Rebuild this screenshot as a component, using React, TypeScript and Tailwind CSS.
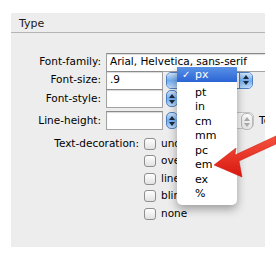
import React from 'react';

const FONT = { fontFamily: '"DejaVu Sans", "Noto Sans", sans-serif' };

function Stepper({ disabled = false }: { disabled?: boolean }) {
  return (
    <div
      className={
        disabled
          ? 'shrink-0 w-[12px] h-[17px] rounded-[5px] border border-[#b8b8b8] bg-gradient-to-b from-[#fafafa] to-[#e4e4e4] flex flex-col items-center justify-center gap-[2px]'
          : 'shrink-0 w-[12px] h-[17px] rounded-[5px] border border-[#4f7fbf] bg-gradient-to-b from-[#cfe3f9] via-[#73aef0] to-[#bcd9f7] flex flex-col items-center justify-center gap-[2px]'
      }
    >
      <svg width="6" height="4" viewBox="0 0 6 4">
        <path d="M3 0 L6 4 L0 4 Z" fill={disabled ? '#a8a8a8' : '#1c2a3c'} />
      </svg>
      <svg width="6" height="4" viewBox="0 0 6 4">
        <path d="M0 0 L6 0 L3 4 Z" fill={disabled ? '#a8a8a8' : '#1c2a3c'} />
      </svg>
    </div>
  );
}

function Field({ value = '', width }: { value?: string; width: string }) {
  return (
    <div
      className={`${width} shrink-0 h-[19px] bg-white border border-[#a2a2a2] border-t-[#8a8a8a] shadow-[inset_0_1px_1px_rgba(0,0,0,0.15)] flex items-center px-[3px] text-[10.5px] text-black whitespace-nowrap overflow-hidden`}
    >
      {value}
    </div>
  );
}

function Label({ children, width = 'w-[90px]' }: { children: React.ReactNode; width?: string }) {
  return <div className={`${width} shrink-0 text-right text-[10.5px] text-black whitespace-nowrap`}>{children}</div>;
}

function Checkbox({ label }: { label: string }) {
  return (
    <div className="h-[17.5px] flex items-center gap-[5px]">
      <div className="shrink-0 w-[12px] h-[12px] rounded-[3px] border border-[#8e8e8e] bg-gradient-to-b from-white to-[#e2e2e2]" />
      <span className="text-[10.5px] text-black whitespace-nowrap">{label}</span>
    </div>
  );
}

const UNITS = ['pt', 'in', 'cm', 'mm', 'pc', 'em', 'ex', '%'];

export default function App() {
  return (
    <div className="relative w-[276px] h-[265px] bg-white overflow-hidden" style={FONT}>
      <div className="absolute left-[11px] top-[13px] w-[254px] h-[234px] bg-[#ededed] overflow-hidden">
        {/* Header */}
        <div className="h-[20px] px-[8px] pt-[4px] text-[11px] leading-[14px] text-[#1a1a1a] border-b border-[#b4b4b4]">
          Type
        </div>

        <div className="pt-[20px] flex flex-col">
          <div className="h-[18px] flex items-center">
            <Label>Font-family:</Label>
            <div className="ml-[5px] shrink-0">
              <Field value="Arial, Helvetica, sans-serif" width="w-[170px]" />
            </div>
          </div>

          <div className="h-[18px] flex items-center">
            <Label>Font-size:</Label>
            <div className="ml-[5px] shrink-0">
              <Field value=".9" width="w-[57px]" />
            </div>
            <div className="shrink-0 ml-[3px] w-[87px] h-[17px] flex items-center rounded-[5px] bg-white border border-[#4f7fbf] overflow-hidden">
              <div className="w-[11px] h-full bg-gradient-to-b from-[#cfe3f9] via-[#73aef0] to-[#bcd9f7]" />
              <div className="flex-1" />
              <div className="w-[13px] h-full bg-gradient-to-b from-[#cfe3f9] via-[#73aef0] to-[#bcd9f7] border-l border-[#4f7fbf] flex flex-col items-center justify-center gap-[2px]">
                <svg width="6" height="4" viewBox="0 0 6 4">
                  <path d="M3 0 L6 4 L0 4 Z" fill="#1c2a3c" />
                </svg>
                <svg width="6" height="4" viewBox="0 0 6 4">
                  <path d="M0 0 L6 0 L3 4 Z" fill="#1c2a3c" />
                </svg>
              </div>
            </div>
          </div>

          <div className="h-[19px] flex items-center">
            <Label>Font-style:</Label>
            <div className="ml-[5px] shrink-0">
              <Field width="w-[57px]" />
            </div>
            <div className="ml-[3px] shrink-0">
              <Stepper />
            </div>
          </div>

          <div className="mt-[3px] h-[19px] flex items-center">
            <Label>Line-height:</Label>
            <div className="ml-[5px] shrink-0">
              <Field width="w-[57px]" />
            </div>
            <div className="ml-[3px] shrink-0">
              <Stepper />
            </div>
            <div className="shrink-0 ml-[2px] w-[74px] h-[17px] rounded-[5px] border border-[#c4c4c4] bg-[#f6f6f6] flex justify-end">
              <Stepper disabled />
            </div>
            <span className="shrink-0 ml-[5px] text-[10.5px] text-black whitespace-nowrap">Text-indent:</span>
          </div>

          <div className="mt-[5px] flex">
            <div className="shrink-0 w-[128px] h-[17.5px] flex items-center justify-end text-[10.5px] text-black whitespace-nowrap">
              Text-decoration:
            </div>
            <div className="ml-[5px] flex flex-col">
              <Checkbox label="underline" />
              <Checkbox label="overline" />
              <Checkbox label="line-through" />
              <Checkbox label="blink" />
              <Checkbox label="none" />
            </div>
          </div>
        </div>

        {/* Open unit menu */}
        <div className="absolute left-[166px] top-[53px] w-[60px] pt-[1px] pb-[4px] bg-white rounded-b-[5px] shadow-[0_4px_10px_rgba(0,0,0,0.35)] text-[11px] leading-none text-black">
          <div className="h-[15px] mb-[3px] flex items-center bg-gradient-to-b from-[#5a92e6] to-[#2b63d4] text-white">
            <span className="w-[18px] pl-[5px] text-[10px]">✓</span>
            <span>px</span>
          </div>
          {UNITS.map((u) => (
            <div key={u} className="h-[14.5px] flex items-center pl-[18px]">
              {u}
            </div>
          ))}
        </div>
      </div>

      {/* Red annotation arrow */}
      <svg className="absolute left-0 top-0 pointer-events-none" width="276" height="265" viewBox="0 0 276 265">
        <defs>
          <linearGradient id="arrowFill" x1="0" y1="0" x2="0" y2="1">
            <stop offset="0" stopColor="#f5533f" />
            <stop offset="1" stopColor="#d9170f" />
          </linearGradient>
        </defs>
        <path
          d="M214 165 L236 148 L235 155 L276 136 L276 144 L239 161 L242 177 Z"
          fill="url(#arrowFill)"
          stroke="#c8120b"
          strokeWidth="0.5"
          strokeLinejoin="round"
        />
      </svg>
    </div>
  );
}
